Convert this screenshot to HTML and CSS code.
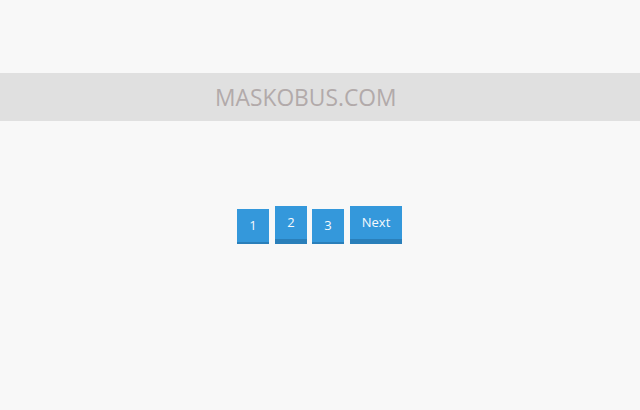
FILE: index.html
```html
<!DOCTYPE html>
<html>
<head>
<meta charset="utf-8">
<link rel="stylesheet" href="styles.css">
</head>
<body>
<header class="band"><span class="brand">MASKOBUS.COM</span></header>
<nav class="pager">
  <a class="btn">1</a>
  <a class="btn up">2</a>
  <a class="btn tight">3</a>
  <a class="btn up next">Next</a>
</nav>
</body>
</html>
```
FILE: styles.css
```css
html, body { margin: 0; padding: 0; }
body {
  background: #f8f8f8;
  font-family: "Open Sans", "Liberation Sans", sans-serif;
  width: 640px;
  height: 410px;
  overflow: hidden;
}
.band {
  margin-top: 73px;
  height: 48px;
  background: #e0e0e0;
  display: flex;
  align-items: center;
  padding-left: 215px;
  box-sizing: border-box;
}
.brand {
  font-size: 22.8px;
  color: #b2aaaa;
}
.pager {
  margin-top: 85px;
  display: flex;
  justify-content: flex-start;
  align-items: flex-end;
  gap: 6px;
  padding-left: 237px;
}
.btn {
  display: flex;
  align-items: center;
  justify-content: center;
  box-sizing: content-box;
  width: 32px;
  height: 33px;
  background: #3498db;
  border-bottom: 2px solid #2a7fba;
  color: #f7fafd;
  font-size: 13px;
  line-height: 1;
}
.btn.tight {
  margin-left: -1px;
}
.btn.up {
  border-bottom-width: 5px;
}
.btn.next {
  width: 30px;
  padding: 0 11px;
}
```
